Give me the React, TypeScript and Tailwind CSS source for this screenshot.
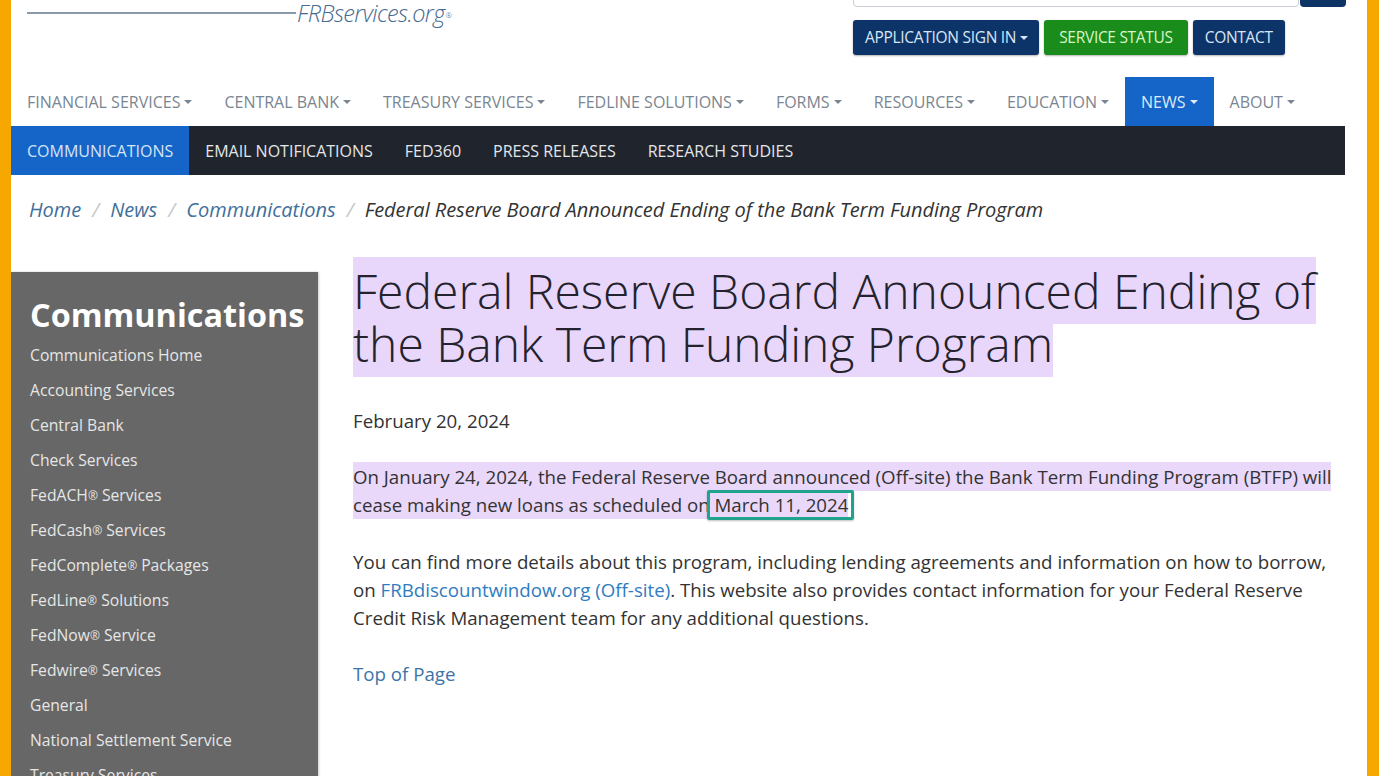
import React from "react";

const Caret = () => (
  <span className="inline-block w-0 h-0 ml-[4px] align-middle border-x-[4px] border-t-[4px] border-x-transparent border-t-current" />
);

const navItems = [
  "FINANCIAL SERVICES",
  "CENTRAL BANK",
  "TREASURY SERVICES",
  "FEDLINE SOLUTIONS",
  "FORMS",
  "RESOURCES",
  "EDUCATION",
  "NEWS",
  "ABOUT",
];

const subItems = ["COMMUNICATIONS", "EMAIL NOTIFICATIONS", "FED360", "PRESS RELEASES", "RESEARCH STUDIES"];

const R = () => <sup className="text-[12px] relative -top-[1px]">®</sup>;

const sideItems: React.ReactNode[] = [
  "Communications Home",
  "Accounting Services",
  "Central Bank",
  "Check Services",
  <>FedACH<R /> Services</>,
  <>FedCash<R /> Services</>,
  <>FedComplete<R /> Packages</>,
  <>FedLine<R /> Solutions</>,
  <>FedNow<R /> Service</>,
  <>Fedwire<R /> Services</>,
  "General",
  "National Settlement Service",
  "Treasury Services",
];

export default function App() {
  return (
    <div
      className="w-[1379px] h-[776px] overflow-hidden flex bg-white"
      style={{ fontFamily: '"Open Sans", "Noto Sans", sans-serif' }}
    >
      <div className="w-[11px] shrink-0 bg-[#f7a800]" />
      <div className="flex-1 flex flex-col min-w-0">
        <div className="w-[1334px]">
          {/* header */}
          <div className="h-[77px] flex justify-between">
            <div className="flex items-start pl-[16px]">
              <div className="w-[269px] h-[2px] bg-[#8a9aab] mt-[12px]" />
              <div className="italic font-light text-[23.5px] leading-[24px] text-[#47698f] mt-[1px] tracking-[-0.6px] ml-[1px]">
                FRBservices.org<sup className="text-[8px] ml-[1px]">®</sup>
              </div>
            </div>
            <div className="flex flex-col items-start w-[492px]">
              <div className="flex -mt-[30px] h-[37px]">
                <div className="w-[446px] h-[37px] border border-[#c9ced4] rounded-[4px] bg-white" />
                <div className="w-[46px] h-[37px] bg-[#0e3466] rounded-[4px] ml-[1px]" />
              </div>
              <div className="flex gap-[5px] mt-[13px] text-[15.5px] tracking-[-0.3px]">
                <div className="h-[35px] pl-[12px] pr-[11px] flex items-center bg-[#0d3468] text-[#d9e6f5] rounded-[3px] shadow-[0_1px_2px_rgba(0,0,0,0.3)]">
                  APPLICATION SIGN IN <Caret />
                </div>
                <div className="h-[35px] px-[15px] flex items-center bg-[#1a8c1c] text-[#d8f5c8] rounded-[3px] shadow-[0_1px_2px_rgba(0,0,0,0.3)]">
                  SERVICE STATUS
                </div>
                <div className="h-[35px] px-[12px] flex items-center bg-[#0d3468] text-[#d9e6f5] rounded-[3px] shadow-[0_1px_2px_rgba(0,0,0,0.3)]">
                  CONTACT
                </div>
              </div>
            </div>
          </div>
          {/* main nav */}
          <div className="h-[49px] flex text-[16px] text-[#7a8592]">
            {navItems.map((n) => (
              <div
                key={n}
                className={
                  "h-full flex items-center px-[16px] " +
                  (n === "NEWS" ? "bg-[#1565c8] text-[#dfe9f7]" : "")
                }
              >
                {n}
                <Caret />
              </div>
            ))}
          </div>
          {/* sub nav */}
          <div className="h-[49px] flex bg-[#20242c] text-[16px] text-[#e4e6ea]">
            {subItems.map((n) => (
              <div
                key={n}
                className={
                  "h-full flex items-center px-[16px] " +
                  (n === "COMMUNICATIONS" ? "bg-[#1565c8] text-[#d4e4f7]" : "")
                }
              >
                {n}
              </div>
            ))}
          </div>
          {/* breadcrumb */}
          <div className="pl-[18px] pt-[22px] h-[83px] italic text-[20px] leading-[26px] text-[#333]">
            <span className="text-[#3f6f9b]">Home</span>
            <span className="text-[#c4c8cc] mx-[11px]">/</span>
            <span className="text-[#3f6f9b]">News</span>
            <span className="text-[#c4c8cc] mx-[11px]">/</span>
            <span className="text-[#3f6f9b]">Communications</span>
            <span className="text-[#c4c8cc] mx-[11px]">/</span>
            <span className="tracking-[-0.05px]">Federal Reserve Board Announced Ending of the Bank Term Funding Program</span>
          </div>
          {/* body */}
          <div className="flex">
            <div className="w-[307px] shrink-0 mt-[14px] bg-[#676767] pl-[19px] pt-[20px] h-[600px] shadow-[1px_0_2px_rgba(0,0,0,0.2)]">
              <div className="text-white font-bold text-[32.4px] leading-[44px]">Communications</div>
              <div className="mt-[2px] text-[15.7px] text-[#e6e6e6]">
                {sideItems.map((s, i) => (
                  <div key={i} className="h-[35px] leading-[35px]">
                    {s}
                  </div>
                ))}
              </div>
            </div>
            <div className="ml-[35px] flex-1 text-[#333]">
              <h1 className="font-light text-[48px] leading-[53px] text-[#24222c] pt-[6px] pr-[8px]">
                <span className="bg-[#e8d6fb] py-[1px]">Federal Reserve Board Announced Ending of the Bank Term Funding Program</span>
              </h1>
              <p className="text-[18.7px] leading-[28px] mt-[37px]">February 20, 2024</p>
              <p className="text-[18.7px] leading-[28px] mt-[28px] pr-[4px]">
                <span className="bg-[#ead8fb] py-[2px]">
                  On January 24, 2024, the Federal Reserve Board announced (Off-site) the Bank Term Funding Program (BTFP) will cease making new loans as scheduled on{" "}
                  <span className="relative">
                    March 11, 2024
                    <span className="absolute -left-[8px] -right-[6px] -top-[2px] -bottom-[3px] border-[3px] border-[#1fa38c] rounded-[2px] shadow-[0_1px_2px_rgba(0,0,0,0.25)]" />
                  </span>
                </span>
              </p>
              <p className="text-[18.7px] leading-[28px] mt-[29px] pr-[4px]">
                You can find more details about this program, including lending agreements and information on how to borrow, on{" "}
                <span className="text-[#2f7cc0]">FRBdiscountwindow.org (Off-site)</span>. This website also provides contact information for your Federal Reserve Credit Risk Management team for any additional questions.
              </p>
              <p className="text-[18.7px] leading-[28px] mt-[28px] text-[#3c74a8]">Top of Page</p>
            </div>
          </div>
        </div>
      </div>
      <div className="w-[12px] shrink-0 bg-[#f7a800]" />
    </div>
  );
}
